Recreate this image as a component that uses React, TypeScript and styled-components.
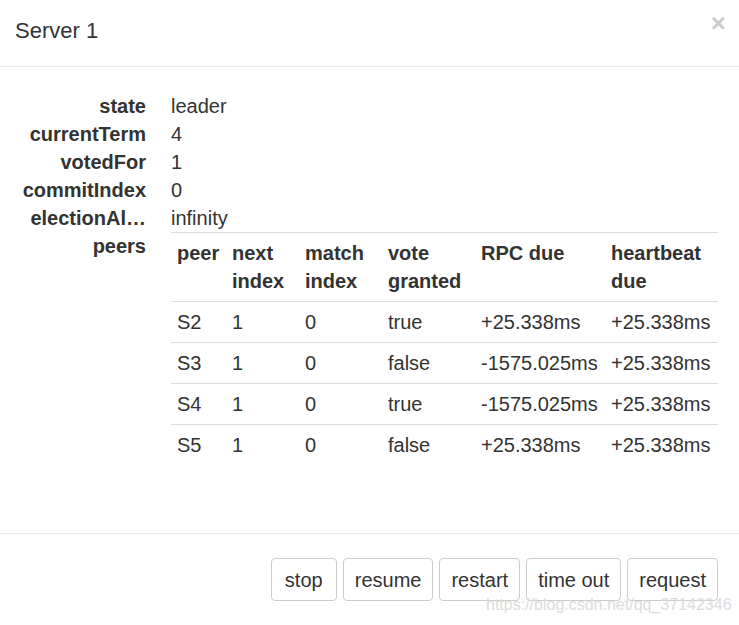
import { Fragment } from "react";
import styled, { createGlobalStyle } from "styled-components";

const GlobalStyle = createGlobalStyle`
  html, body {
    margin: 0;
    padding: 0;
    background: #fff;
  }
  body {
    font-family: "Liberation Sans", Arial, sans-serif;
    font-size: 20px;
    line-height: 28px;
    color: #333;
  }
  * {
    box-sizing: border-box;
  }
`;

const Modal = styled.div`
  position: relative;
  width: 739px;
  height: 625px;
  background: #fff;
  overflow: hidden;
`;

const Header = styled.div`
  display: flex;
  justify-content: space-between;
  align-items: center;
  height: 67px;
  padding: 0 15px 5px 15px;
  border-bottom: 1px solid #e5e5e5;
`;

const Title = styled.h4`
  margin: 0;
  font-size: 22px;
  font-weight: normal;
  line-height: 24px;
  color: #333;
`;

const Close = styled.button`
  align-self: flex-start;
  margin-top: 9px;
  margin-right: -2px;
  padding: 0;
  border: 0;
  background: transparent;
  font-family: "Liberation Sans", Arial, sans-serif;
  font-size: 26px;
  font-weight: bold;
  line-height: 28px;
  color: #000;
  opacity: 0.2;
  cursor: pointer;
`;

const Body = styled.div`
  padding: 25px 21px 68px 21px;
`;

const Props = styled.dl`
  display: grid;
  grid-template-columns: 125px 1fr;
  column-gap: 25px;
  margin: 0;
`;

const Term = styled.dt`
  font-weight: bold;
  text-align: right;
  white-space: nowrap;
`;

const Value = styled.dd`
  margin: 0;
`;

const Table = styled.table`
  width: 100%;
  table-layout: fixed;
  border-collapse: collapse;
  border-spacing: 0;
`;

const Th = styled.th`
  padding: 6px 6px;
  text-align: left;
  vertical-align: top;
  font-weight: bold;
  border-top: 1px solid #ddd;
  border-bottom: 1px solid #ddd;
`;

const Td = styled.td`
  padding: 6px 6px;
  text-align: left;
  vertical-align: top;
  white-space: nowrap;
  border-top: 1px solid #ddd;
`;

const Footer = styled.div`
  display: flex;
  justify-content: flex-end;
  gap: 6px;
  padding: 24px 21px 0 0;
  border-top: 1px solid #e5e5e5;
`;

const Btn = styled.button`
  min-width: 66px;
  height: 43px;
  padding: 6px 11px;
  font-family: "Liberation Sans", Arial, sans-serif;
  font-size: 20px;
  line-height: 28px;
  color: #333;
  background: #fff;
  border: 1px solid #ccc;
  border-radius: 4px;
  cursor: pointer;
`;

const Watermark = styled.div`
  position: absolute;
  left: 486px;
  top: 595px;
  font-family: "Liberation Sans", Arial, sans-serif;
  font-size: 16px;
  line-height: 20px;
  color: #dcdcdc;
  pointer-events: none;
`;

// long labels get clipped like the dl-horizontal dt does
const shorten = (label: string, max = 10) =>
  label.length > max + 2 ? label.slice(0, max) + "…" : label;

const fields = [
  ["state", "leader"],
  ["currentTerm", "4"],
  ["votedFor", "1"],
  ["commitIndex", "0"],
  ["electionAlarm", "infinity"],
];

const cols = [55, 73, 83, 93, 130, 113];

const peers = [
  { peer: "S2", next: 1, match: 0, vote: "true", rpc: "+25.338ms", hb: "+25.338ms" },
  { peer: "S3", next: 1, match: 0, vote: "false", rpc: "-1575.025ms", hb: "+25.338ms" },
  { peer: "S4", next: 1, match: 0, vote: "true", rpc: "-1575.025ms", hb: "+25.338ms" },
  { peer: "S5", next: 1, match: 0, vote: "false", rpc: "+25.338ms", hb: "+25.338ms" },
];

const App = () => {
  return (
    <Modal>
      <GlobalStyle />
      <Header>
        <Title>Server 1</Title>
        <Close>×</Close>
      </Header>
      <Body>
        <Props>
          {fields.map(([k, v]) => (
            <Fragment key={k}>
              <Term title={k}>{shorten(k)}</Term>
              <Value>{v}</Value>
            </Fragment>
          ))}
          <Term>peers</Term>
          <Value>
            <Table>
              <colgroup>
                {cols.map((w, i) => (
                  <col key={i} style={{ width: w }} />
                ))}
              </colgroup>
              <thead>
                <tr>
                  <Th>peer</Th>
                  <Th>next index</Th>
                  <Th>match index</Th>
                  <Th>vote granted</Th>
                  <Th>RPC due</Th>
                  <Th>heartbeat due</Th>
                </tr>
              </thead>
              <tbody>
                {peers.map((p) => (
                  <tr key={p.peer}>
                    <Td>{p.peer}</Td>
                    <Td>{p.next}</Td>
                    <Td>{p.match}</Td>
                    <Td>{p.vote}</Td>
                    <Td>{p.rpc}</Td>
                    <Td>{p.hb}</Td>
                  </tr>
                ))}
              </tbody>
            </Table>
          </Value>
        </Props>
      </Body>
      <Footer>
        <Btn>stop</Btn>
        <Btn>resume</Btn>
        <Btn>restart</Btn>
        <Btn>time out</Btn>
        <Btn>request</Btn>
      </Footer>
      <Watermark>https://blog.csdn.net/qq_37142346</Watermark>
    </Modal>
  );
};

export default App;
